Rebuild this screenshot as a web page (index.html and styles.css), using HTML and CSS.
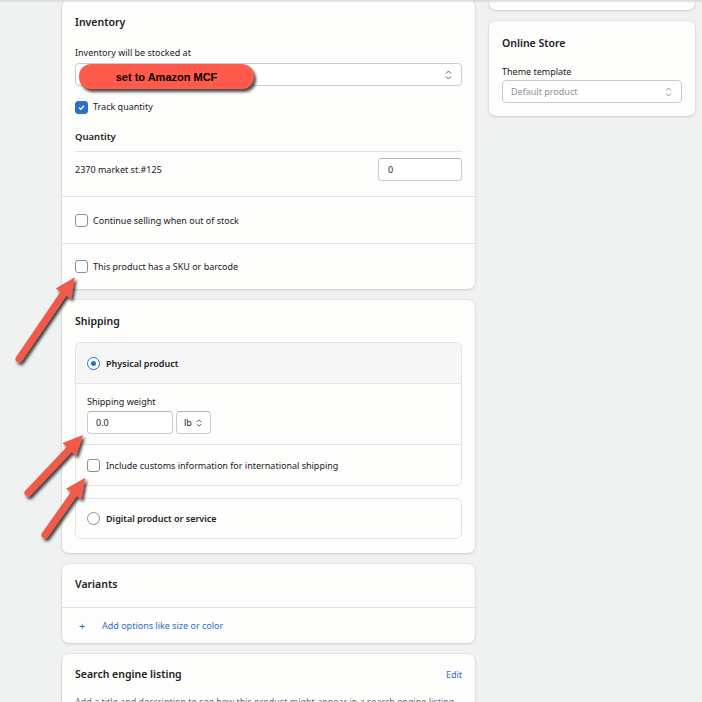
FILE: index.html
```html
<!DOCTYPE html>
<html>
<head>
<meta charset="utf-8">
<link rel="stylesheet" href="styles.css">
</head>
<body>
<div class="topline"></div>
<div class="page">
  <div class="col-main">
    <section class="card">
      <div class="sec first">
        <h2 class="title">Inventory</h2>
        <div class="lbl lbl-inv">Inventory will be stocked at</div>
        <div class="select wide">
          <span class="pill">set to Amazon MCF</span>
          <svg class="chev" width="9" height="12" viewBox="0 0 9 12"><path d="M2 4.5 L4.5 2 L7 4.5 M2 7.5 L4.5 10 L7 7.5" fill="none" stroke="#5c5f62" stroke-width="1"/></svg>
        </div>
        <div class="check-line track">
          <span class="cb checked"><svg width="9" height="9" viewBox="0 0 9 9"><path d="M2 4.6 L3.8 6.3 L7 2.8" fill="none" stroke="#fff" stroke-width="1.3"/></svg></span>
          <span>Track quantity</span>
        </div>
        <h3 class="qty-title">Quantity</h3>
        <div class="qrow">
          <span>2370 market st.#125</span>
          <div class="input qty-input">0</div>
        </div>
      </div>
      <div class="row-sec">
        <span class="cb"></span><span>Continue selling when out of stock</span>
      </div>
      <div class="row-sec">
        <span class="cb"></span><span>This product has a SKU or barcode</span>
      </div>
    </section>

    <section class="card ship">
      <h2 class="title">Shipping</h2>
      <div class="box">
        <div class="box-head">
          <span class="radio on"></span><span class="strong">Physical product</span>
        </div>
        <div class="weight">
          <div class="lbl">Shipping weight</div>
          <div class="weight-fields">
            <div class="input w-input">0.0</div>
            <div class="input unit">lb<svg width="8" height="10" viewBox="0 0 8 10"><path d="M1.8 4 L4 1.8 L6.2 4 M1.8 6 L4 8.2 L6.2 6" fill="none" stroke="#5c5f62" stroke-width="1"/></svg></div>
          </div>
        </div>
        <div class="box-row customs">
          <span class="cb"></span><span>Include customs information for international shipping</span>
        </div>
      </div>
      <div class="box digital">
        <div class="box-row">
          <span class="radio"></span><span class="strong">Digital product or service</span>
        </div>
      </div>
    </section>

    <section class="card">
      <div class="head-sec">
        <h2 class="title">Variants</h2>
      </div>
      <div class="add-row">
        <span class="plus">+</span><span class="link">Add options like size or color</span>
      </div>
    </section>

    <section class="card seo">
      <div class="seo-head">
        <h2 class="title">Search engine listing</h2>
        <span class="link">Edit</span>
      </div>
      <p class="seo-text">Add a title and description to see how this product might appear in a search engine listing</p>
    </section>
  </div>

  <div class="col-side">
    <section class="card stub"></section>
    <section class="card store">
      <h2 class="title">Online Store</h2>
      <div class="lbl lbl-theme">Theme template</div>
      <div class="select side-select">
        <span class="muted">Default product</span>
        <svg class="chev" width="9" height="12" viewBox="0 0 9 12"><path d="M2 4.5 L4.5 2 L7 4.5 M2 7.5 L4.5 10 L7 7.5" fill="none" stroke="#8c9196" stroke-width="1"/></svg>
      </div>
    </section>
  </div>

  <svg class="arrows" width="702" height="702" viewBox="0 0 702 702">
    <defs>
      <filter id="sh" x="-30%" y="-30%" width="160%" height="160%">
        <feDropShadow dx="2" dy="2.5" stdDeviation="1.6" flood-color="#000" flood-opacity="0.75"/>
      </filter>
    </defs>
    <g filter="url(#sh)" fill="#f05a4b">
      <g transform="translate(19 359) rotate(-55.7)">
        <rect x="-3.5" y="-3.6" width="86" height="7.2" rx="3.6"/>
        <polygon points="79,-9.5 99,0 79,9.5"/>
      </g>
      <g transform="translate(28 493) rotate(-46.5)">
        <rect x="-3.5" y="-3.6" width="67" height="7.2" rx="3.6"/>
        <polygon points="60,-9.5 80,0 60,9.5"/>
      </g>
      <g transform="translate(45 535) rotate(-54.9)">
        <rect x="-3.5" y="-3.6" width="57" height="7.2" rx="3.6"/>
        <polygon points="50,-9.5 70,0 50,9.5"/>
      </g>
    </g>
  </svg>
</div>
</body>
</html>
```

FILE: styles.css
```css
* { box-sizing: border-box; }
html, body {
  margin: 0;
  padding: 0;
  background: #f0f1f1;
  font-family: "Noto Sans", "Open Sans", sans-serif;
  font-size: 9px;
  color: #202223;
  overflow: hidden;
}
.topline {
  position: absolute;
  top: 0; left: 0; right: 0;
  height: 3px;
  background: linear-gradient(#d4d6d8, rgba(240,241,241,0));
  z-index: 3;
}
.page {
  position: relative;
  width: 702px;
  height: 702px;
  display: flex;
  align-items: flex-start;
  gap: 14px;
  padding: 0 0 0 62px;
}
.col-main {
  width: 413px;
  display: flex;
  flex-direction: column;
  gap: 11px;
}
.col-side {
  width: 206px;
  display: flex;
  flex-direction: column;
  gap: 11px;
  margin-top: -21px;
}
.card {
  background: #fdfdfc;
  border-radius: 7px;
  box-shadow: 0 0 0 1px rgba(63,63,68,0.04), 0 1px 3px rgba(63,63,68,0.16);
}
.title {
  margin: 0;
  font-size: 10.5px;
  line-height: 14px;
  font-weight: 600;
}
.lbl { line-height: 14px; }
.sec { padding: 15px 13px 0; }
.sec.first {
  padding-bottom: 15px;
  border-bottom: 1px solid #e1e3e5;
}
.lbl-inv { margin-top: 17px; }
.select {
  position: relative;
  height: 23px;
  border: 1px solid #c9cccf;
  border-radius: 4px;
  background: #fff;
  display: flex;
  align-items: center;
  padding: 0 8px;
}
.select.wide { margin-top: 3px; }
.chev { margin-left: auto; }
.pill {
  position: absolute;
  left: 3px;
  top: 0;
  width: 175px;
  height: 25px;
  border-radius: 12px;
  background: #ff5a4b;
  box-shadow: 2px 3px 3px rgba(0,0,0,0.7);
  font-family: "Liberation Sans", Arial, sans-serif;
  font-weight: bold;
  font-size: 11px;
  color: #000;
  display: flex;
  align-items: center;
  justify-content: center;
}
.check-line {
  display: flex;
  align-items: center;
  gap: 5px;
  line-height: 14px;
}
.track { margin-top: 14px; }
.cb {
  width: 13px;
  height: 13px;
  flex: none;
  border: 1px solid #8c9196;
  border-radius: 3px;
  background: #fff;
  display: inline-flex;
  align-items: center;
  justify-content: center;
}
.cb.checked {
  background: #2c6ecb;
  border-color: #2c6ecb;
}
.qty-title {
  margin: 16px 0 0;
  font-size: 9.5px;
  font-weight: 600;
  line-height: 14px;
  padding-bottom: 7px;
  border-bottom: 1px solid #e1e3e5;
}
.qrow {
  margin-top: 6px;
  display: flex;
  align-items: center;
  justify-content: space-between;
}
.input {
  height: 23px;
  border: 1px solid #c9cccf;
  border-top-color: #aeb4b9;
  border-radius: 4px;
  background: #fff;
  display: flex;
  align-items: center;
  padding: 0 9px;
}
.qty-input { width: 84px; }
.row-sec {
  height: 46px;
  padding: 0 13px;
  display: flex;
  align-items: center;
  gap: 5px;
}
.row-sec + .row-sec { border-top: 1px solid #e1e3e5; height: 46px; }
.ship { padding: 14px 13px 14px; }
.box {
  margin-top: 14px;
  border: 1px solid #e1e3e5;
  border-radius: 6px;
  overflow: hidden;
}
.box-head {
  height: 41px;
  background: #f6f6f7;
  border-bottom: 1px solid #e1e3e5;
  display: flex;
  align-items: center;
  gap: 6px;
  padding: 0 11px;
}
.strong { font-weight: 600; }
.radio {
  width: 13px;
  height: 13px;
  flex: none;
  border-radius: 50%;
  border: 1px solid #8c9196;
  background: #fff;
  display: inline-flex;
  align-items: center;
  justify-content: center;
}
.radio.on { border: 1.5px solid #2c6ecb; }
.radio.on::after {
  content: "";
  width: 5px;
  height: 5px;
  border-radius: 50%;
  background: #2c6ecb;
}
.weight {
  padding: 11px 11px 10px;
  border-bottom: 1px solid #e1e3e5;
}
.weight .lbl { margin-bottom: 2px; }
.weight-fields { display: flex; gap: 3px; }
.w-input { width: 86px; padding: 0 8px; }
.unit { width: 35px; padding: 0 0 0 7px; gap: 3px; }
.box-row {
  height: 39px;
  display: flex;
  align-items: center;
  gap: 6px;
  padding: 0 11px;
}
.box-row.customs { height: 40px; }
.digital { margin-top: 12px; }
.head-sec {
  padding: 13px 13px 16px;
  border-bottom: 1px solid #e1e3e5;
}
.add-row {
  height: 35px;
  display: flex;
  align-items: center;
  padding: 0 17px;
  color: #2c6ecb;
}
.plus { width: 23px; font-size: 11px; }
.link { color: #2c6ecb; }
.seo { padding: 13px 13px 20px; }
.seo-head {
  display: flex;
  justify-content: space-between;
  align-items: center;
}
.seo-text {
  margin: 14px 0 0;
  line-height: 14px;
  color: #6d7175;
}
.stub { height: 31px; }
.store { padding: 15px 13px 13px; }
.lbl-theme { margin-top: 15px; margin-bottom: 1px; }
.side-select { padding: 0 8px; }
.muted { color: #8c9196; }
.arrows {
  position: absolute;
  left: 0;
  top: 0;
  pointer-events: none;
  z-index: 5;
}
```
